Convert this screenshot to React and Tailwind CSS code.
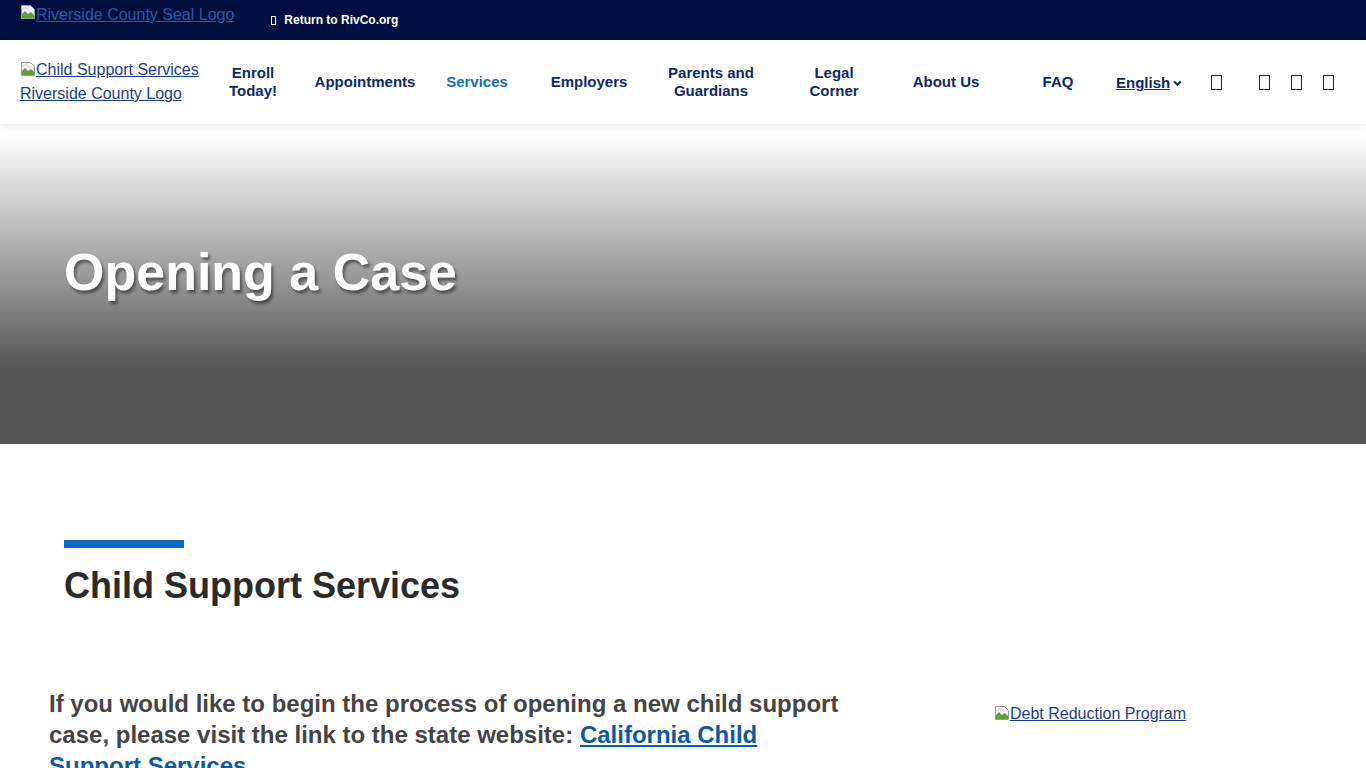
import React from "react";

const BrokenImg = () => (
  <svg width="16" height="16" viewBox="0 0 16 16" className="inline-block align-[-2px]">
    <path d="M1.5 1.5h9l4 4v9h-13z" fill="#f1f1f1" stroke="#9a9a9a" />
    <path d="M2 14L2 10l3-3 3 3 3-2 3 3v3z" fill="#5aa33a" />
    <path d="M2 5l3-2 4 2v1L5 4 2 6z" fill="#cfcfcf" />
  </svg>
);

const Tofu = ({ className = "" }) => (
  <span className={`inline-block w-[11px] h-[15px] border border-[#0b2a6b] ${className}`} />
);

const navItems = [
  { label: ["Enroll", "Today!"], w: "w-[112px]" },
  { label: ["Appointments"], w: "w-[112px]" },
  { label: ["Services"], w: "w-[112px]", active: true },
  { label: ["Employers"], w: "w-[112px]" },
  { label: ["Parents and", "Guardians"], w: "w-[132px]" },
  { label: ["Legal", "Corner"], w: "w-[114px]" },
  { label: ["About Us"], w: "w-[110px]" },
  { label: ["FAQ"], w: "w-[114px]" },
];

export default function App() {
  return (
    <div className="min-h-screen bg-white font-['Liberation_Sans',Arial,sans-serif]">
      {/* top bar */}
      <div className="h-[40px] bg-[#000f3f] flex items-start pl-[20px]">
        <a href="#" className="mt-[4px] text-[16px] leading-[22px] text-[#2b5aa6] underline flex items-start">
          <BrokenImg />
          <span>Riverside County Seal Logo</span>
        </a>
        <a href="#" className="ml-[37px] mt-[12px] flex items-center text-white text-[12px] font-bold leading-[16px]">
          <span className="inline-block w-[5px] h-[9px] border border-white mr-[8px]" />
          Return to RivCo.org
        </a>
      </div>

      {/* header */}
      <header className="relative z-10 h-[84px] bg-white shadow-[0_2px_8px_rgba(0,0,0,0.08)] flex items-start pl-[20px]">
        <a href="#" className="mt-[18px] w-[180px] text-[16px] leading-[24px] text-[#1a3f8a] underline shrink-0">
          <BrokenImg />
          Child Support Services Riverside County Logo
        </a>
        <nav className="flex items-center h-full -ml-[3px]">
          {navItems.map((item) => (
            <a
              key={item.label.join(" ")}
              href="#"
              className={`${item.w} text-center text-[15px] font-bold leading-[18px] ${
                item.active ? "text-[#1b6db4]" : "text-[#0b2a6b]"
              }`}
            >
              {item.label.map((l) => (
                <div key={l}>{l}</div>
              ))}
            </a>
          ))}
          <a href="#" className="ml-[1px] flex items-center text-[15px] font-bold text-[#0b2a6b] underline leading-[18px] mt-[2px]">
            English
            <svg width="9" height="7" viewBox="0 0 9 7" className="ml-[3px]">
              <path d="M1.2 1.5L4.5 4.8 7.8 1.5" fill="none" stroke="#0b2a6b" strokeWidth="2" />
            </svg>
          </a>
          <Tofu className="ml-[29px]" />
          <Tofu className="ml-[37px]" />
          <Tofu className="ml-[21px]" />
          <Tofu className="ml-[21px]" />
        </nav>
      </header>

      {/* hero */}
      <section className="h-[320px] bg-[linear-gradient(180deg,#ffffff_3%,#555555_77%,#555555_100%)] flex items-center pl-[64px] pb-[24px]">
        <h1 className="text-[52px] font-bold text-white leading-none [text-shadow:2px_3px_3px_rgba(0,0,0,0.45)]">
          Opening a Case
        </h1>
      </section>

      {/* content */}
      <section className="pt-[96px]">
        <div className="pl-[64px]">
          <div className="w-[120px] h-[8px] bg-[#0b6bc4]" />
          <h2 className="mt-[16px] text-[36px] font-bold leading-[44px] text-[#2b2b2b]">
            Child Support Services
          </h2>
        </div>
        <div className="flex mt-[80px] pl-[49px]">
          <p className="w-[805px] shrink-0 text-[24px] font-bold leading-[31px] text-[#444444]">
            If you would like to begin the process of opening a new child support case, please visit the
            link to the state website:{" "}
            <a href="#" className="text-[#0b5aa6] underline">
              California Child Support Services
            </a>
          </p>
          <div className="ml-[140px] mt-[14px]">
            <a href="#" className="text-[16px] leading-[22px] text-[#1a3f8a] underline">
              <BrokenImg />
              Debt Reduction Program
            </a>
          </div>
        </div>
      </section>
    </div>
  );
}
